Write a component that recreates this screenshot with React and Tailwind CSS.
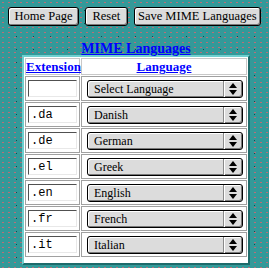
import { useState } from "react";

const LANGS = ["Select Language", "Danish", "German", "Greek", "English", "French", "Italian"];

const ROWS = [
  { ext: "", lang: "Select Language" },
  { ext: ".da", lang: "Danish" },
  { ext: ".de", lang: "German" },
  { ext: ".el", lang: "Greek" },
  { ext: ".en", lang: "English" },
  { ext: ".fr", lang: "French" },
  { ext: ".it", lang: "Italian" },
];

function Bevel({ children, className = "" }) {
  return (
    <button
      type="button"
      className={`h-[19px] whitespace-nowrap rounded-[3px] border border-black bg-[#dcdcdc] px-0 text-[12.5px] leading-none text-black shadow-[inset_1px_1px_0_#ffffff,inset_-1px_-1px_0_#7a7a7a] ${className}`}
    >
      {children}
    </button>
  );
}

function Arrows() {
  return (
    <svg width="10" height="12" viewBox="0 0 10 12">
      <path d="M5 0 L9 5 L1 5 Z" fill="#000" />
      <path d="M1 7 L9 7 L5 12 Z" fill="#000" />
    </svg>
  );
}

function LangSelect({ value }) {
  return (
    <div className="flex h-[18px] w-[156px] items-stretch rounded-[3px] border border-black bg-[#dcdcdc] shadow-[inset_1px_1px_0_#ffffff,inset_-1px_-1px_0_#7a7a7a]">
      <div className="flex flex-1 items-center whitespace-nowrap pl-[6px] text-[12px] leading-none text-black">{value}</div>
      <div className="flex w-[19px] items-center justify-center border-l border-l-[#8a8a8a] shadow-[inset_1px_0_0_#ffffff]">
        <Arrows />
      </div>
    </div>
  );
}

export default function App() {
  const [rows] = useState(ROWS);

  return (
    <div className="min-h-[268px] w-[269px] bg-[#339999] bg-[radial-gradient(circle,#b86f78_0.6px,transparent_0.8px),radial-gradient(circle,#0b4d50_0.6px,transparent_0.8px)] bg-[length:6px_5px,17px_13px] bg-[position:0_0,8px_4px] px-2 pt-[7px] font-['Liberation_Serif',serif]">
      <div className="flex gap-[6px]">
        <Bevel className="w-[72px]">Home Page</Bevel>
        <Bevel className="w-[43px]">Reset</Bevel>
        <Bevel className="w-[129px]">Save MIME Languages</Bevel>
      </div>

      <div className="ml-[14px] mt-[15px] w-[228px] text-center text-[14px] font-bold leading-[16px] text-[#0000ff] underline">
        MIME Languages
      </div>

      <div className="ml-[14px] mt-[-2px] w-[228px] border-2 border-t-[#6fcfcf] border-l-[#6fcfcf] border-b-[#1d6b6b] border-r-[#1d6b6b] bg-white pb-[5px]">
        <table className="w-full table-fixed border-separate border-spacing-[1px]">
          <thead>
            <tr>
              <th className="h-[17px] w-[55px] border border-[#c8c8c8] p-0 text-center text-[13px] font-bold leading-none text-[#0000ff] underline">
                Extension
              </th>
              <th className="h-[17px] border border-[#c8c8c8] p-0 text-center text-[13px] font-bold leading-none text-[#0000ff] underline">
                Language
              </th>
            </tr>
          </thead>
          <tbody>
            {rows.map((row, i) => (
              <tr key={i}>
                <td className="h-[25px] border border-[#a0a0a0] px-[2px] py-0">
                  <input
                    type="text"
                    defaultValue={row.ext}
                    className="block h-[17px] w-[49px] border border-t-[#505050] border-l-[#505050] border-b-[#e8e8e8] border-r-[#e8e8e8] bg-white px-[2px] font-['Liberation_Mono',monospace] text-[12px] leading-none text-black outline-none"
                  />
                </td>
                <td className="h-[25px] border border-[#a0a0a0] py-0 pl-[5px] pr-[3px]">
                  <LangSelect value={LANGS.includes(row.lang) ? row.lang : ""} />
                </td>
              </tr>
            ))}
          </tbody>
        </table>
      </div>
    </div>
  );
}
